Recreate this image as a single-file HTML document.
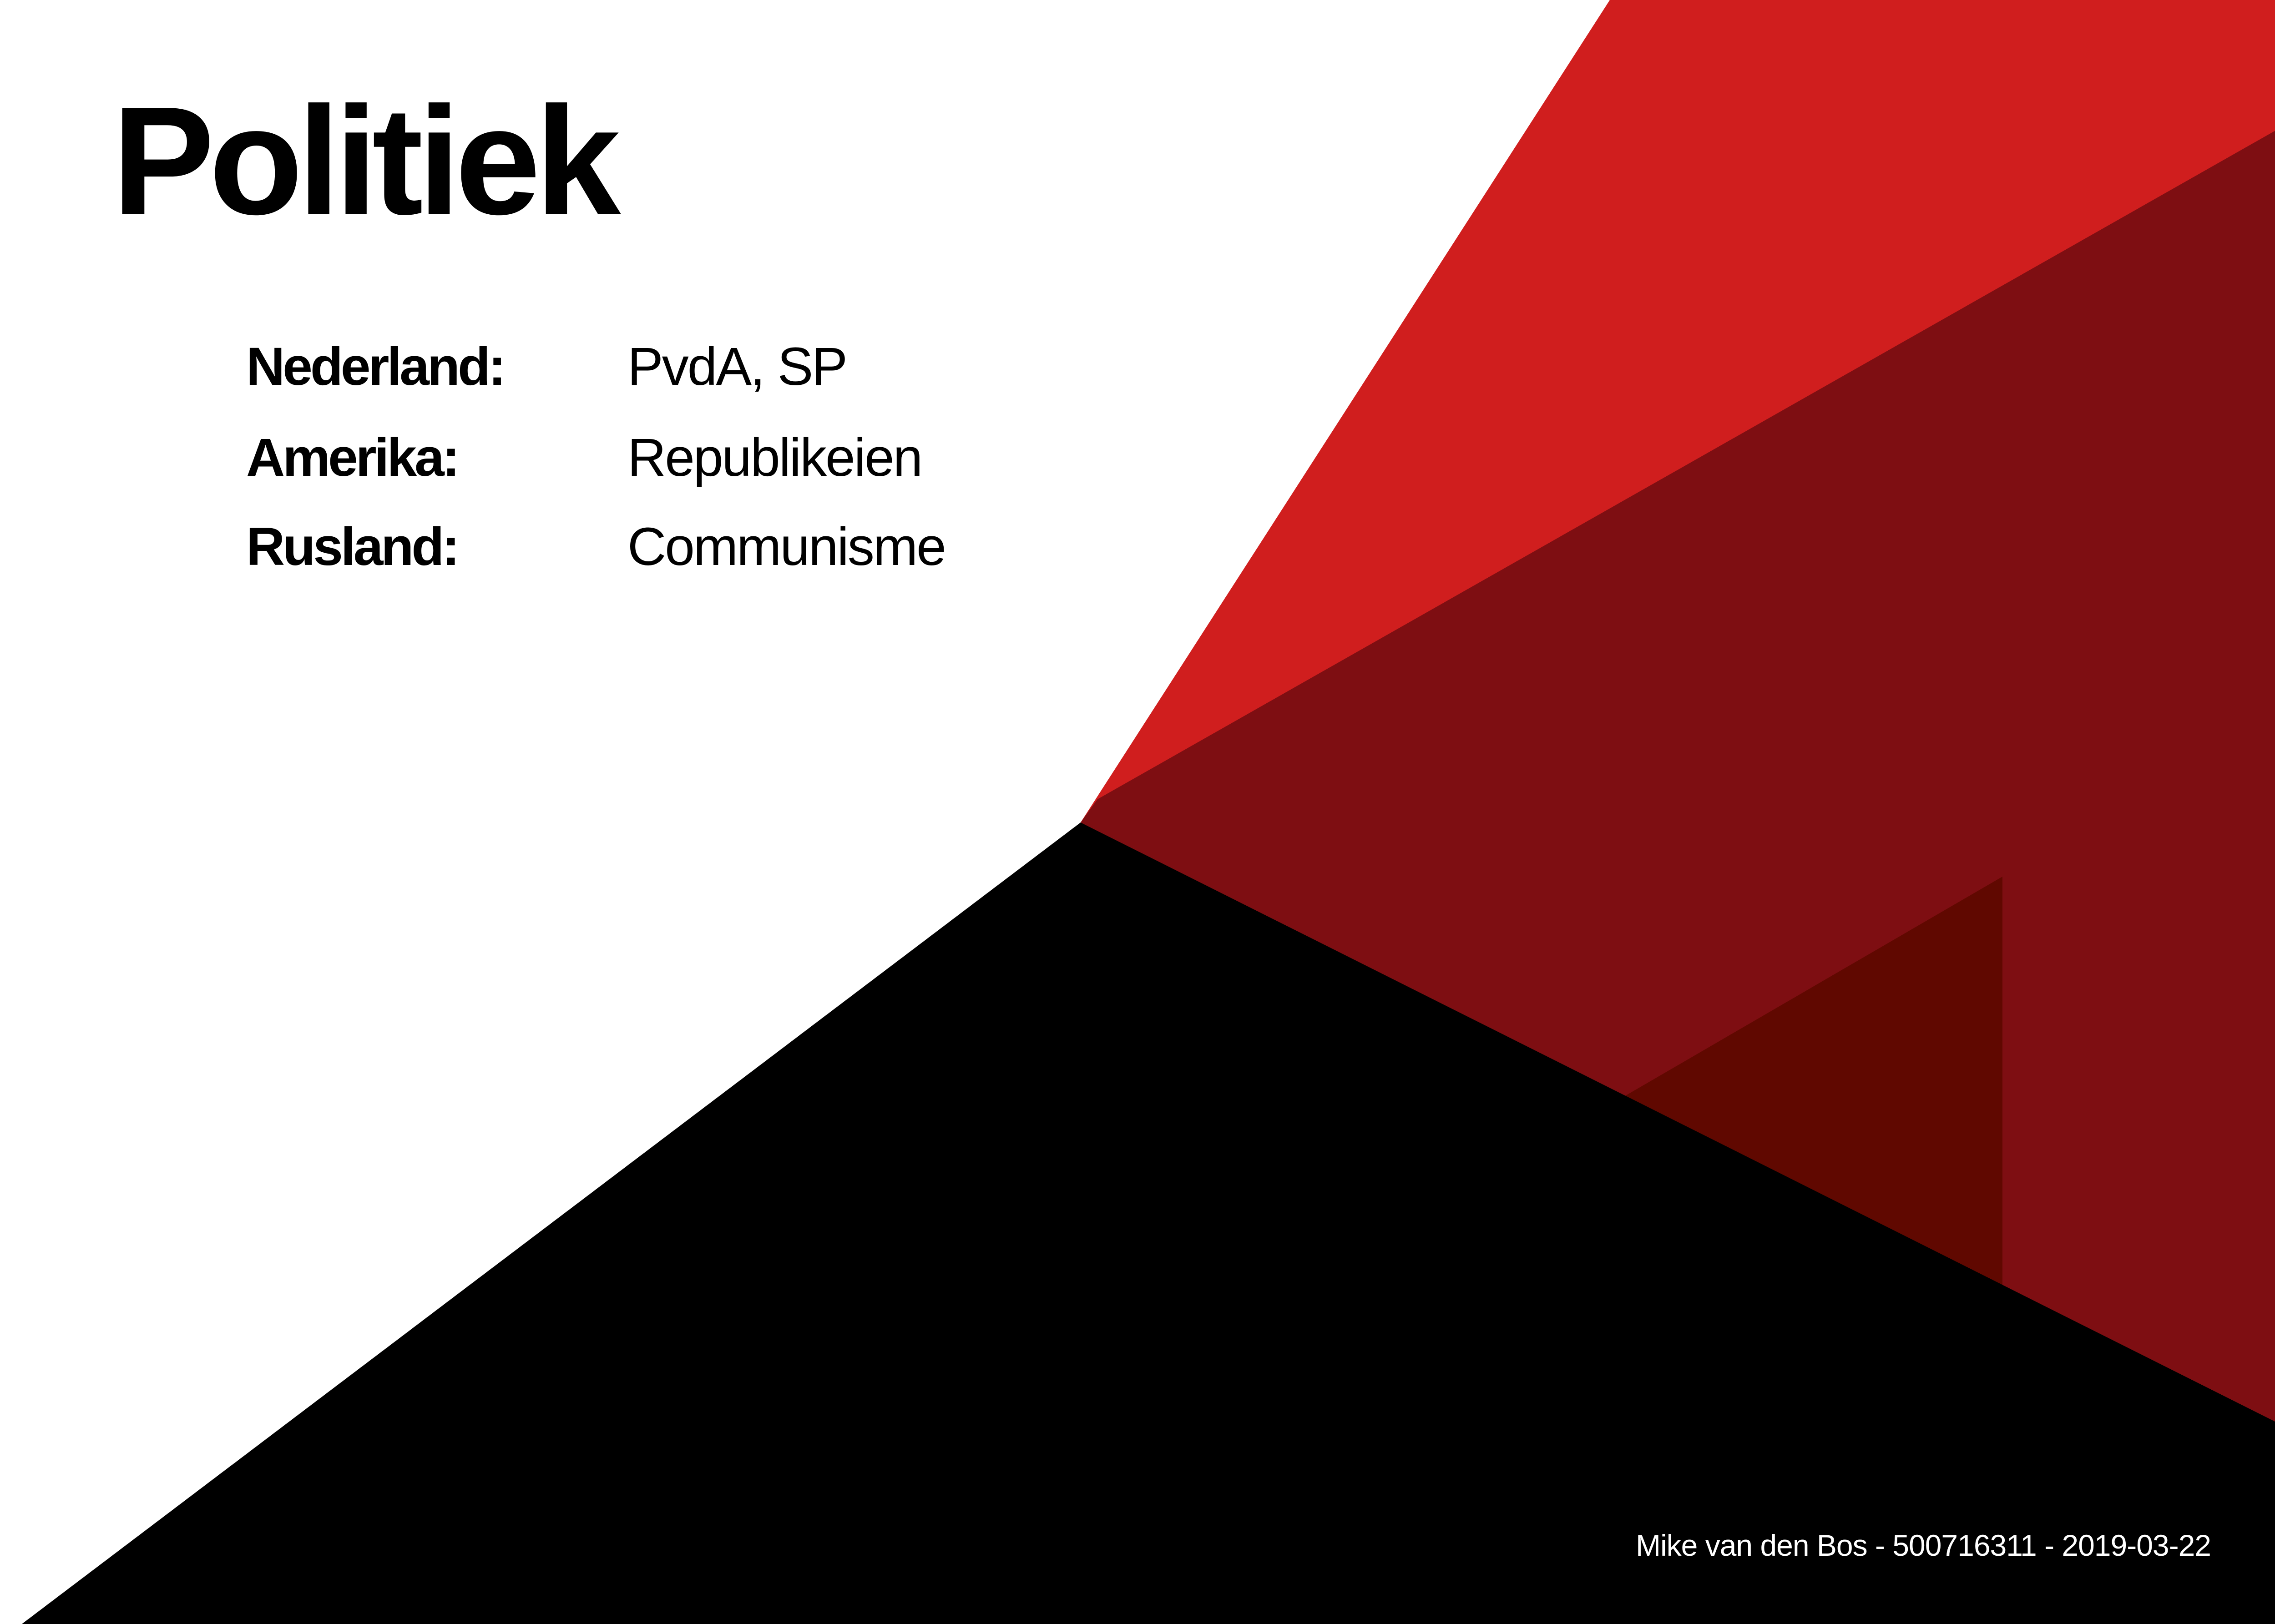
<!DOCTYPE html>
<html><head><meta charset="utf-8">
<style>
html,body{margin:0;padding:0;}
body{width:5052px;height:3570px;position:relative;overflow:hidden;background:#fff;font-family:"Liberation Sans",sans-serif;}
svg{position:absolute;left:0;top:0;}
.t{position:absolute;white-space:nowrap;color:#000;line-height:1;}
</style></head><body>
<svg width="5052" height="3570" viewBox="0 0 5052 3570">
<polygon points="3538,0 5052,0 5052,3570 2375,1808" fill="#d01e1e"/>
<polygon points="2412,1757 5052,258 5052,3151 2375,1808" fill="#7e0e12"/>
<polygon points="3570,2410 4401,1927 4401,2829" fill="#600800"/>
<polygon points="2375,1808 5052,3151 5052,3570 48,3570" fill="#000"/>
</svg>
<div class="t" style="left:246px;top:184px;font-size:338px;font-weight:bold;letter-spacing:-12px;">Politiek</div>
<div class="t" style="left:541px;top:747px;font-size:118px;font-weight:bold;letter-spacing:-5px;">Nederland:</div>
<div class="t" style="left:541px;top:947px;font-size:118px;font-weight:bold;letter-spacing:-5px;">Amerika:</div>
<div class="t" style="left:541px;top:1143px;font-size:118px;font-weight:bold;letter-spacing:-5px;">Rusland:</div>
<div class="t" style="left:1379px;top:747px;font-size:118px;letter-spacing:-3px;">PvdA, SP</div>
<div class="t" style="left:1379px;top:947px;font-size:118px;letter-spacing:-3px;">Republikeien</div>
<div class="t" style="left:1379px;top:1143px;font-size:118px;letter-spacing:-3px;">Communisme</div>
<div class="t" style="right:193px;top:3364px;font-size:66px;color:#fff;letter-spacing:-1px;">Mike van den Bos - 500716311 - 2019-03-22</div>
</body></html>
